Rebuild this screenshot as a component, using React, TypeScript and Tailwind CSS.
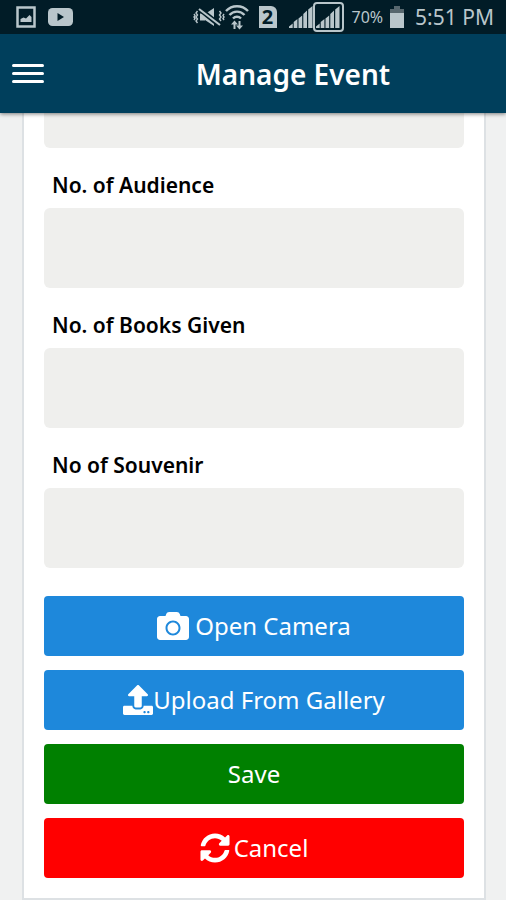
import { useState } from "react";
import type { ReactNode } from "react";
import { FaCamera, FaSyncAlt, FaUpload } from "react-icons/fa";

const fields = [
  { id: "audience", label: "No. of Audience" },
  { id: "books", label: "No. of Books Given" },
  { id: "souvenir", label: "No of Souvenir" },
];

function SignalBars() {
  return (
    <svg viewBox="0 0 24 24" className="h-6 w-6" fill="currentColor" aria-hidden="true">
      <path d="M0 23v-1.500l3.700-3V23zM4.700 23v-6l3.700-3v9zM9.500 23v-9.500l3.700-3V23zM14.300 23V9l3.700-3.500V23zM19.200 23V4.500L23.500 1v22z" />
    </svg>
  );
}

function StatusBar() {
  return (
    <div className="flex h-[34px] items-center justify-between bg-[#011c27] pr-3 pl-4 text-[#b9c6cb]">
      <div className="flex items-center gap-3">
        <svg viewBox="0 0 20 22" className="h-[22px] w-5" aria-hidden="true">
          <path d="M1.500 1.500h17v19h-17z" fill="none" stroke="currentColor" strokeWidth="2.500" />
          <path d="M4.500 16v-3l3-1.500 2.500 1 3.500-3.500 2 2v5z" fill="currentColor" />
        </svg>
        <svg viewBox="0 0 25 18" className="h-[18px] w-[25px]" aria-hidden="true">
          <rect width="25" height="18" rx="4.500" fill="currentColor" />
          <path d="M9.500 5v8l6.500-4z" fill="#011c27" />
        </svg>
      </div>
      <div className="flex items-center">
        <svg viewBox="0 0 32 22" className="h-[22px] w-8" fill="none" stroke="currentColor" aria-hidden="true">
          <path d="M7 7.500h5v7H7zM12 8l9-6v18l-9-6z" fill="currentColor" stroke="none" />
          <path d="M6 2.500l21 17" stroke="#011c27" strokeWidth="5" />
          <path d="M6 3l21 16" strokeWidth="2.200" />
          <path d="M4.500 5l-1.500 2 1.500 2L3 11l1.500 2L3 15l1.500 2M1 8l1 1.500L1 11l1 1.500L1 14M26.500 5L28 7l-1.500 2 1.500 2-1.500 2 1.500 2M31 8l-1 1.500 1 1.500-1 1.500 1 1.500" strokeWidth="1.400" />
        </svg>
        <svg viewBox="0 0 24 26" className="h-[26px] w-6" fill="none" stroke="currentColor" aria-hidden="true">
          <path d="M1 7a15 15 0 0 1 22 0M4.500 11a10 10 0 0 1 15 0M8 14.500a5.500 5.500 0 0 1 8 0" strokeWidth="2.400" />
          <path d="M9.500 25v-6M14.500 17v6" strokeWidth="2" />
          <path d="M6 20.500l3.500-4 3.500 4zM11 21.500h7l-3.500 4z" fill="currentColor" stroke="none" />
        </svg>
        <div className="ml-2.5 flex h-[22px] w-[18px] items-center justify-center rounded-tr-md bg-[#b9c6cb] text-xl font-bold text-[#011c27]">
          2
        </div>
        <div className="ml-3">
          <SignalBars />
        </div>
        <div className="flex h-[30px] w-[31px] items-center justify-center rounded-sm border-2 border-[#b9c6cb]">
          <SignalBars />
        </div>
        <span className="ml-2 text-base">70%</span>
        <svg viewBox="0 0 16 22" className="ml-1.5 h-[22px] w-4" aria-hidden="true">
          <path d="M5 0h6v3h4v5H1V3h4z" fill="#57676e" />
          <path d="M1 7h14v15H1z" fill="currentColor" />
        </svg>
        <span className="ml-2.5 text-[21px] leading-8">5:51 PM</span>
      </div>
    </div>
  );
}

function ActionButton({ color, children }: { color: string; children: ReactNode }) {
  return (
    <button
      type="button"
      className={`flex h-[60px] w-full items-center justify-center rounded text-2xl text-white ${color}`}
    >
      {children}
    </button>
  );
}

export default function App() {
  const [values, setValues] = useState<Record<string, string>>({});

  function update(id: string, value: string) {
    setValues({ ...values, [id]: value });
  }

  return (
    <div className="min-h-screen bg-[#f0f1f1] font-['Noto_Sans',sans-serif]">
      <header className="relative shadow-[0_1px_4px_rgba(0,0,0,0.5)]">
        <StatusBar />
        <div className="flex h-[79px] items-center bg-[#003f5c] text-white">
          <button type="button" aria-label="Menu" className="flex h-full w-20 flex-col justify-center gap-[5px] pl-3">
            <span className="h-[3px] w-8 rounded-sm bg-white" />
            <span className="h-[3px] w-8 rounded-sm bg-white" />
            <span className="h-[3px] w-8 rounded-sm bg-white" />
          </button>
          <h1 className="flex-1 text-center text-[28px] font-semibold">Manage Event</h1>
        </div>
      </header>

      <main className="mx-5">
        <form className="ml-0.5 border-2 border-t-0 border-[#dde1e4] bg-white px-5 pb-5">
          <input
            aria-label="Previous field"
            value={values.previous ?? ""}
            onChange={(e) => update("previous", e.target.value)}
            className="block h-[35px] w-full rounded-b-md bg-[#efefed] px-4 text-xl"
          />
          {fields.map((field) => (
            <div key={field.id}>
              <label htmlFor={field.id} className="block h-[60px] px-2 pt-6 text-[21px] leading-[26px] font-semibold text-black">
                {field.label}
              </label>
              <input
                id={field.id}
                value={values[field.id] ?? ""}
                onChange={(e) => update(field.id, e.target.value)}
                className="block h-20 w-full rounded-md bg-[#efefed] px-4 text-xl"
              />
            </div>
          ))}
          <div className="mt-7 space-y-3.5">
            <ActionButton color="bg-[#1e88db]">
              <FaCamera className="mr-1.5 size-8" />
              Open Camera
            </ActionButton>
            <ActionButton color="bg-[#1e88db]">
              <FaUpload className="size-[30px]" />
              Upload From Gallery
            </ActionButton>
            <ActionButton color="bg-[#008000]">Save</ActionButton>
            <ActionButton color="bg-[#ff0000]">
              <FaSyncAlt className="mr-1 size-[30px]" />
              Cancel
            </ActionButton>
          </div>
        </form>
      </main>
    </div>
  );
}
